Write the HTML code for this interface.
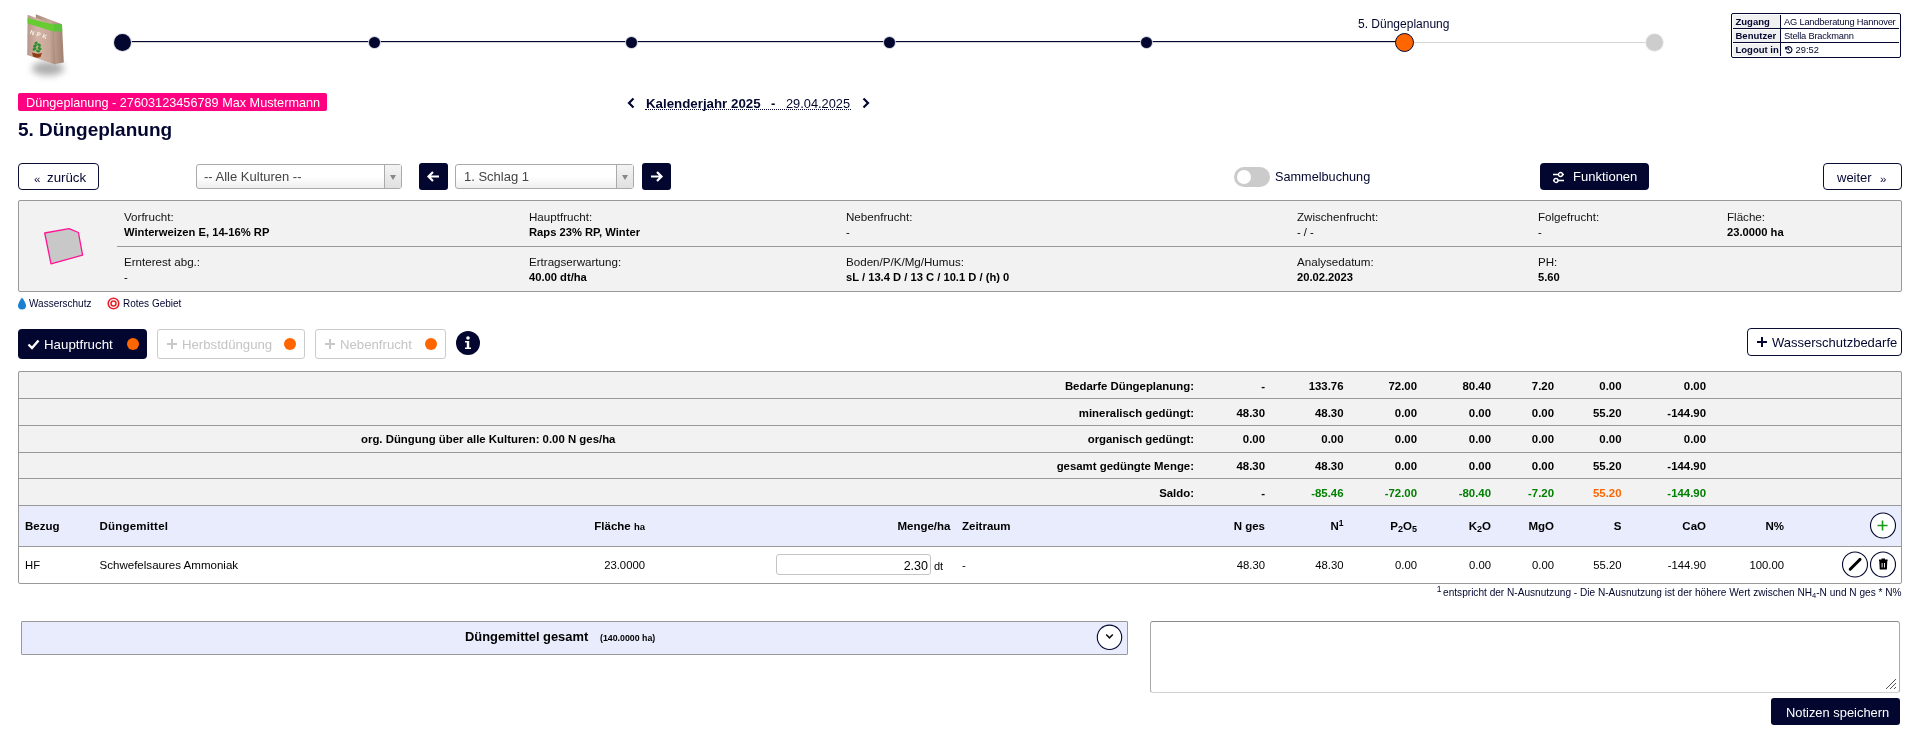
<!DOCTYPE html>
<html><head><meta charset="utf-8">
<style>
*{box-sizing:border-box;margin:0;padding:0}
html,body{width:1912px;height:732px;overflow:hidden;background:#fff}
body{font-family:"Liberation Sans",sans-serif;color:#030730;position:relative;will-change:transform}
.a{position:absolute;white-space:nowrap;line-height:1}
.b{font-weight:bold}
.r{text-align:right}
.btn-o{position:absolute;border:1.5px solid #0a0e35;border-radius:4px;background:#fff}
.btn-d{position:absolute;background:#030730;border-radius:4px}
.sel{position:absolute;border:1px solid #aaa;border-radius:3px;background:linear-gradient(#fff 0%,#fff 50%,#eee 100%)}
.sel .arr{position:absolute;right:0;top:0;bottom:0;width:17px;border-left:1px solid #aaa;background:linear-gradient(#f4f4f4,#e0e0e0)}
.sel .arr:after{content:"";position:absolute;left:5px;top:10px;border-left:3.5px solid transparent;border-right:3.5px solid transparent;border-top:5px solid #888}
.hl{position:absolute;left:18px;width:1884px;height:1px;background:#999}
</style></head><body>

<!-- logo -->
<svg class="a" style="left:10px;top:5px" width="70" height="85" viewBox="-10 -5 70 85">
  <defs>
    <filter id="blur" x="-50%" y="-50%" width="200%" height="200%"><feGaussianBlur stdDeviation="3.5"/></filter>
    <filter id="sb" x="-20%" y="-20%" width="140%" height="140%"><feGaussianBlur stdDeviation="0.5"/></filter>
    <linearGradient id="bagg" x1="0" x2="1"><stop offset="0" stop-color="#b8978a"/><stop offset="0.35" stop-color="#d2b3a5"/><stop offset="0.8" stop-color="#c6a797"/><stop offset="1" stop-color="#a88878"/></linearGradient>
    <linearGradient id="bagb" x1="0" x2="1"><stop offset="0" stop-color="#a88a7c"/><stop offset="0.5" stop-color="#c8aa9b"/><stop offset="1" stop-color="#a08070"/></linearGradient>
  </defs>
  <ellipse cx="28" cy="58.5" rx="16" ry="7" fill="#777" opacity="0.6" filter="url(#blur)"/>
  <g filter="url(#sb)">
  <path d="M15.8 4.3 L42 14.3 L43.8 52.5 L35 54 L15.8 45 Z" fill="url(#bagb)"/>
  <path d="M33 13.8 L42 14.3 L42.2 21.5 L33.5 21.5 Z" fill="#5cc43a"/>
  <path d="M7.6 4.8 L33.5 14.3 L35.4 54.5 L7.2 44.9 Z" fill="url(#bagg)"/>
  <path d="M7.6 8.1 L33.5 14.6 L33.7 21.5 L7.6 13.4 Z" fill="#66cc33"/>
  <text x="9.5" y="24" font-size="6.2" font-weight="bold" fill="#f6efe9" transform="rotate(17 9.5 24)" font-family="Liberation Sans" letter-spacing="2.2">NPK</text>
  <path d="M12 42.5 Q17 44.5 22 43 L20.5 47 Q16.5 48.5 13 46.5 Z" fill="#8e3d12"/>
  <g fill="#2f8f2f">
   <ellipse cx="15" cy="36" rx="2.2" ry="1.3" transform="rotate(-30 15 36)"/>
   <ellipse cx="19" cy="35" rx="2.2" ry="1.3" transform="rotate(30 19 35)"/>
   <ellipse cx="14.5" cy="39" rx="2.2" ry="1.3" transform="rotate(-30 14.5 39)"/>
   <ellipse cx="19.5" cy="38.5" rx="2.2" ry="1.3" transform="rotate(30 19.5 38.5)"/>
   <ellipse cx="16" cy="33" rx="1.8" ry="1.2" transform="rotate(-40 16 33)"/>
   <ellipse cx="18" cy="41" rx="2.2" ry="1.3" transform="rotate(20 18 41)"/>
  </g>
  </g>
</svg>

<!-- progress -->
<div class="a" style="left:122px;top:42px;width:1532px;height:1px;background:#d4d4d4"></div>
<div class="a" style="left:122px;top:41px;width:1282px;height:1px;background:#030730"></div>
<div class="a" style="left:114px;top:34px;width:17px;height:17px;border-radius:50%;background:#030730;box-shadow:0 0 0 1px #dfe0e6"></div>
<div class="a" style="left:369px;top:37px;width:11px;height:11px;border-radius:50%;background:#030730;box-shadow:0 0 0 1px #d0d2dc"></div>
<div class="a" style="left:626px;top:37px;width:11px;height:11px;border-radius:50%;background:#030730;box-shadow:0 0 0 1px #d0d2dc"></div>
<div class="a" style="left:884px;top:37px;width:11px;height:11px;border-radius:50%;background:#030730;box-shadow:0 0 0 1px #d0d2dc"></div>
<div class="a" style="left:1141px;top:37px;width:11px;height:11px;border-radius:50%;background:#030730;box-shadow:0 0 0 1px #d0d2dc"></div>
<div class="a" style="left:1395px;top:33px;width:19px;height:19px;border-radius:50%;background:#ff6600;border:1.6px solid #030730"></div>
<div class="a" style="left:1646px;top:34px;width:17px;height:17px;border-radius:50%;background:#cdcdcd;box-shadow:0 0 0 1px #f0f0f0"></div>
<div class="a" style="left:1358px;top:18px;font-size:12px">5. Düngeplanung</div>


<!-- user box -->
<div class="a" style="left:1731px;top:13px;width:170px;height:45px;border:1.5px solid #030730;border-radius:2px;background:#fff">
  <div class="a" style="left:1px;top:1px;width:47px;height:13px;background:#f0f0f0"></div>
  <div class="a" style="left:1px;top:15.5px;width:47px;height:13px;background:#f0f0f0"></div>
  <div class="a" style="left:1px;top:29.5px;width:47px;height:12.5px;background:#f0f0f0"></div>
  <div class="a" style="left:48px;top:1px;width:1px;height:41px;background:#030730"></div>
  <div class="a" style="left:1px;top:14px;width:166px;height:1px;background:#030730"></div>
  <div class="a" style="left:1px;top:28px;width:166px;height:1px;background:#030730"></div>
  <div class="a b" style="left:3.5px;top:3px;font-size:9.5px">Zugang</div>
  <div class="a b" style="left:3.5px;top:17px;font-size:9.5px">Benutzer</div>
  <div class="a b" style="left:3.5px;top:31px;font-size:9.5px">Logout in</div>
  <div class="a" style="left:52px;top:3.8px;font-size:9.3px;letter-spacing:-0.2px">AG Landberatung Hannover</div>
  <div class="a" style="left:52px;top:17.8px;font-size:9.3px;letter-spacing:-0.2px">Stella Brackmann</div>
  <div class="a" style="left:52px;top:31px;font-size:9.3px">
    <svg width="9" height="9" viewBox="0 0 16 16" style="vertical-align:-1px"><path d="M3 3 L3 7 L7 7" fill="none" stroke="#030730" stroke-width="2"/><path d="M3.5 6.5 A5.5 5.5 0 1 1 4 11.5" fill="none" stroke="#030730" stroke-width="2"/><path d="M8 5 L8 8.5 L10.5 10" fill="none" stroke="#030730" stroke-width="1.6"/></svg> 29:52</div>
</div>

<!-- badge + heading -->
<div class="a" style="left:18px;top:93px;width:309px;height:18px;background:#ff0080;border-radius:2px"></div>
<div class="a" style="left:26px;top:97px;font-size:12.7px;color:#fff">Düngeplanung - 27603123456789 Max Mustermann</div>
<div class="a b" style="left:18px;top:120px;font-size:19px">5. Düngeplanung</div>

<!-- calendar nav -->
<svg class="a" style="left:627px;top:97px" width="8" height="12" viewBox="0 0 8 12"><path d="M6.5 1.5 L2 6 L6.5 10.5" fill="none" stroke="#030730" stroke-width="2.2"/></svg>
<div class="a b" style="left:646px;top:97px;font-size:13.3px">Kalenderjahr 2025</div>
<div class="a b" style="left:771px;top:97px;font-size:13px">-</div>
<div class="a" style="left:786px;top:98px;font-size:12.8px">29.04.2025</div>
<div class="a" style="left:645px;top:109px;width:206px;height:0;border-top:1px dotted #030730"></div>
<svg class="a" style="left:862px;top:97px" width="8" height="12" viewBox="0 0 8 12"><path d="M1.5 1.5 L6 6 L1.5 10.5" fill="none" stroke="#030730" stroke-width="2.2"/></svg>

<!-- controls row -->
<div class="btn-o" style="left:18px;top:163px;width:81px;height:27px"></div>
<div class="a" style="left:34px;top:173.5px;font-size:11.5px">«</div>
<div class="a" style="left:47px;top:171px;font-size:13.3px">zurück</div>

<div class="sel" style="left:196px;top:164px;width:206px;height:25px"><div class="arr"></div></div>
<div class="a" style="left:204px;top:170px;font-size:13px;color:#444">-- Alle Kulturen --</div>

<div class="btn-d" style="left:419px;top:163px;width:29px;height:27px;border-radius:3px"></div>
<svg class="a" style="left:426px;top:169px" width="15" height="15" viewBox="0 0 15 15"><path d="M13 7.5 L2.5 7.5 M7 3 L2.5 7.5 L7 12" fill="none" stroke="#fff" stroke-width="2.2"/></svg>

<div class="sel" style="left:455px;top:164px;width:179px;height:25px"><div class="arr"></div></div>
<div class="a" style="left:464px;top:170px;font-size:13px;color:#444">1. Schlag 1</div>

<div class="btn-d" style="left:642px;top:163px;width:29px;height:27px;border-radius:3px"></div>
<svg class="a" style="left:649px;top:169px" width="15" height="15" viewBox="0 0 15 15"><path d="M2 7.5 L12.5 7.5 M8 3 L12.5 7.5 L8 12" fill="none" stroke="#fff" stroke-width="2.2"/></svg>

<div class="a" style="left:1234px;top:167px;width:36px;height:20px;border-radius:10px;background:#cbcbcb"></div>
<div class="a" style="left:1237px;top:170px;width:14px;height:14px;border-radius:50%;background:#fff"></div>
<div class="a" style="left:1275px;top:171px;font-size:12.7px">Sammelbuchung</div>

<div class="btn-d" style="left:1540px;top:163px;width:109px;height:27px"></div>
<svg class="a" style="left:1552px;top:171px" width="13" height="13" viewBox="0 0 13 13"><path d="M1 3.5 L12 3.5 M1 9.5 L12 9.5" stroke="#fff" stroke-width="1.3"/><circle cx="8.5" cy="3.5" r="2" fill="#030730" stroke="#fff" stroke-width="1.3"/><circle cx="4" cy="9.5" r="2" fill="#030730" stroke="#fff" stroke-width="1.3"/></svg>
<div class="a" style="left:1573px;top:170px;font-size:13px;color:#fff">Funktionen</div>

<div class="btn-o" style="left:1823px;top:163px;width:79px;height:27px"></div>
<div class="a" style="left:1837px;top:171px;font-size:13px">weiter</div>
<div class="a" style="left:1880px;top:173.5px;font-size:11.5px">»</div>


<!-- info box -->
<div class="a" style="left:18px;top:200px;width:1884px;height:92px;background:#f2f2f2;border:1px solid #999;border-radius:2px"></div>
<div class="a" style="left:117px;top:246px;width:1784px;height:1px;background:#999"></div>
<svg class="a" style="left:40px;top:225px" width="46" height="42" viewBox="0 0 46 42"><path d="M4.7 8 L29 3.7 L38.4 7.5 L42.6 30.2 L11 38.9 Z" fill="#c8c8c8" stroke="#ff1493" stroke-width="1.3" stroke-linejoin="round"/></svg>
<div class="a" style="left:124px;top:211px;font-size:11.6px;color:#111">Vorfrucht:</div>
<div class="a b" style="left:124px;top:227px;font-size:11.2px;color:#000">Winterweizen E, 14-16% RP</div>
<div class="a" style="left:124px;top:256px;font-size:11.6px;color:#111">Ernterest abg.:</div>
<div class="a" style="left:124px;top:272px;font-size:11.2px;color:#000">-</div>

<div class="a" style="left:529px;top:211px;font-size:11.6px;color:#111">Hauptfrucht:</div>
<div class="a b" style="left:529px;top:227px;font-size:11.2px;color:#000">Raps 23% RP, Winter</div>
<div class="a" style="left:529px;top:256px;font-size:11.6px;color:#111">Ertragserwartung:</div>
<div class="a b" style="left:529px;top:272px;font-size:11.2px;color:#000">40.00 dt/ha</div>

<div class="a" style="left:846px;top:211px;font-size:11.6px;color:#111">Nebenfrucht:</div>
<div class="a" style="left:846px;top:227px;font-size:11.2px;color:#000">-</div>
<div class="a" style="left:846px;top:256px;font-size:11.6px;color:#111">Boden/P/K/Mg/Humus:</div>
<div class="a b" style="left:846px;top:272px;font-size:11.2px;color:#000">sL / 13.4 D / 13 C / 10.1 D / (h) 0</div>

<div class="a" style="left:1297px;top:211px;font-size:11.6px;color:#111">Zwischenfrucht:</div>
<div class="a" style="left:1297px;top:227px;font-size:11.2px;color:#000">- / -</div>
<div class="a" style="left:1297px;top:256px;font-size:11.6px;color:#111">Analysedatum:</div>
<div class="a b" style="left:1297px;top:272px;font-size:11.2px;color:#000">20.02.2023</div>

<div class="a" style="left:1538px;top:211px;font-size:11.6px;color:#111">Folgefrucht:</div>
<div class="a" style="left:1538px;top:227px;font-size:11.2px;color:#000">-</div>
<div class="a" style="left:1538px;top:256px;font-size:11.6px;color:#111">PH:</div>
<div class="a b" style="left:1538px;top:272px;font-size:11.2px;color:#000">5.60</div>

<div class="a" style="left:1727px;top:211px;font-size:11.6px;color:#111">Fläche:</div>
<div class="a b" style="left:1727px;top:227px;font-size:11.2px;color:#000">23.0000 ha</div>

<!-- legend -->
<svg class="a" style="left:17px;top:297px" width="10" height="13" viewBox="0 0 10 13"><path d="M5 0.5 C5 0.5 1 6 1 8.5 A4 4 0 0 0 9 8.5 C9 6 5 0.5 5 0.5 Z" fill="#1a7fd0"/></svg>
<div class="a" style="left:29px;top:299.3px;font-size:10px">Wasserschutz</div>
<svg class="a" style="left:107px;top:297px" width="13" height="13" viewBox="0 0 13 13"><circle cx="6.5" cy="6.5" r="5.3" fill="none" stroke="#e8202a" stroke-width="1.6"/><circle cx="6.5" cy="6.5" r="2.5" fill="none" stroke="#e8202a" stroke-width="1.5"/></svg>
<div class="a" style="left:123px;top:299.3px;font-size:10px">Rotes Gebiet</div>

<!-- tabs -->
<div class="btn-d" style="left:18px;top:329px;width:129px;height:30px"></div>
<svg class="a" style="left:27px;top:339px" width="13" height="11" viewBox="0 0 13 11"><path d="M1.5 5.5 L5 9 L11.5 1.5" fill="none" stroke="#fff" stroke-width="2.4"/></svg>
<div class="a" style="left:44px;top:338px;font-size:13.3px;color:#fff">Hauptfrucht</div>
<div class="a" style="left:127px;top:338px;width:12px;height:12px;border-radius:50%;background:#ff6600"></div>

<div class="a" style="left:157px;top:329px;width:148px;height:30px;border:1px solid #ccc;border-radius:3px;background:#fff"></div>
<svg class="a" style="left:167px;top:339px" width="10" height="10" viewBox="0 0 10 10"><path d="M5 0 V10 M0 5 H10" stroke="#c8c8c8" stroke-width="2"/></svg>
<div class="a" style="left:182px;top:338px;font-size:13.2px;color:#c4c4c4">Herbstdüngung</div>
<div class="a" style="left:284px;top:338px;width:12px;height:12px;border-radius:50%;background:#ff6600"></div>

<div class="a" style="left:315px;top:329px;width:131px;height:30px;border:1px solid #ccc;border-radius:3px;background:#fff"></div>
<svg class="a" style="left:325px;top:339px" width="10" height="10" viewBox="0 0 10 10"><path d="M5 0 V10 M0 5 H10" stroke="#c8c8c8" stroke-width="2"/></svg>
<div class="a" style="left:340px;top:338px;font-size:13.2px;color:#c4c4c4">Nebenfrucht</div>
<div class="a" style="left:425px;top:338px;width:12px;height:12px;border-radius:50%;background:#ff6600"></div>

<div class="a" style="left:456px;top:331px;width:24px;height:24px;border-radius:50%;background:#030730"></div>
<svg class="a" style="left:462px;top:336px" width="12" height="14" viewBox="0 0 12 14"><circle cx="6" cy="2" r="1.8" fill="#fff"/><path d="M3 5 H7.2 V11.5 H9 V13 H3 V11.5 H4.8 V6.5 H3 Z" fill="#fff"/></svg>

<div class="btn-o" style="left:1747px;top:328px;width:155px;height:28px"></div>
<svg class="a" style="left:1757px;top:337px" width="10" height="10" viewBox="0 0 10 10"><path d="M5 0 V10 M0 5 H10" stroke="#030730" stroke-width="2"/></svg>
<div class="a" style="left:1772px;top:336px;font-size:13px">Wasserschutzbedarfe</div>

<!-- summary table -->
<div class="a" style="left:18px;top:371px;width:1884px;height:134px;background:#f2f2f2"></div>
<div class="a" style="left:18px;top:505px;width:1884px;height:41px;background:#e8ecfc"></div>
<div class="a" style="left:18px;top:546px;width:1884px;height:37px;background:#fff"></div>
<div class="a" style="left:18px;top:371px;width:1884px;height:213px;border:1px solid #999;border-radius:2px"></div>
<div class="a" style="left:18px;top:398px;width:1884px;height:1px;background:#999"></div>
<div class="a" style="left:18px;top:425px;width:1884px;height:1px;background:#999"></div>
<div class="a" style="left:18px;top:452px;width:1884px;height:1px;background:#999"></div>
<div class="a" style="left:18px;top:478px;width:1884px;height:1px;background:#999"></div>
<div class="a" style="left:18px;top:505px;width:1884px;height:1px;background:#999"></div>
<div class="a" style="left:18px;top:546px;width:1884px;height:1px;background:#999"></div>
<div class="a b" style="right:718.0px;top:381.3px;font-size:11.4px;color:#000">Bedarfe Düngeplanung:</div>
<div class="a b" style="right:647.0px;top:381.3px;font-size:11.4px;color:#000">-</div>
<div class="a b" style="right:568.5px;top:381.3px;font-size:11.4px;color:#000">133.76</div>
<div class="a b" style="right:495.0px;top:381.3px;font-size:11.4px;color:#000">72.00</div>
<div class="a b" style="right:421.0px;top:381.3px;font-size:11.4px;color:#000">80.40</div>
<div class="a b" style="right:358.0px;top:381.3px;font-size:11.4px;color:#000">7.20</div>
<div class="a b" style="right:290.5px;top:381.3px;font-size:11.4px;color:#000">0.00</div>
<div class="a b" style="right:206.0px;top:381.3px;font-size:11.4px;color:#000">0.00</div>
<div class="a b" style="right:718.0px;top:407.8px;font-size:11.4px;color:#000">mineralisch gedüngt:</div>
<div class="a b" style="right:647.0px;top:407.8px;font-size:11.4px;color:#000">48.30</div>
<div class="a b" style="right:568.5px;top:407.8px;font-size:11.4px;color:#000">48.30</div>
<div class="a b" style="right:495.0px;top:407.8px;font-size:11.4px;color:#000">0.00</div>
<div class="a b" style="right:421.0px;top:407.8px;font-size:11.4px;color:#000">0.00</div>
<div class="a b" style="right:358.0px;top:407.8px;font-size:11.4px;color:#000">0.00</div>
<div class="a b" style="right:290.5px;top:407.8px;font-size:11.4px;color:#000">55.20</div>
<div class="a b" style="right:206.0px;top:407.8px;font-size:11.4px;color:#000">-144.90</div>
<div class="a b" style="right:718.0px;top:434.3px;font-size:11.4px;color:#000">organisch gedüngt:</div>
<div class="a b" style="right:647.0px;top:434.3px;font-size:11.4px;color:#000">0.00</div>
<div class="a b" style="right:568.5px;top:434.3px;font-size:11.4px;color:#000">0.00</div>
<div class="a b" style="right:495.0px;top:434.3px;font-size:11.4px;color:#000">0.00</div>
<div class="a b" style="right:421.0px;top:434.3px;font-size:11.4px;color:#000">0.00</div>
<div class="a b" style="right:358.0px;top:434.3px;font-size:11.4px;color:#000">0.00</div>
<div class="a b" style="right:290.5px;top:434.3px;font-size:11.4px;color:#000">0.00</div>
<div class="a b" style="right:206.0px;top:434.3px;font-size:11.4px;color:#000">0.00</div>
<div class="a b" style="right:718.0px;top:461.3px;font-size:11.4px;color:#000">gesamt gedüngte Menge:</div>
<div class="a b" style="right:647.0px;top:461.3px;font-size:11.4px;color:#000">48.30</div>
<div class="a b" style="right:568.5px;top:461.3px;font-size:11.4px;color:#000">48.30</div>
<div class="a b" style="right:495.0px;top:461.3px;font-size:11.4px;color:#000">0.00</div>
<div class="a b" style="right:421.0px;top:461.3px;font-size:11.4px;color:#000">0.00</div>
<div class="a b" style="right:358.0px;top:461.3px;font-size:11.4px;color:#000">0.00</div>
<div class="a b" style="right:290.5px;top:461.3px;font-size:11.4px;color:#000">55.20</div>
<div class="a b" style="right:206.0px;top:461.3px;font-size:11.4px;color:#000">-144.90</div>
<div class="a b" style="right:718.0px;top:488.3px;font-size:11.4px;color:#000">Saldo:</div>
<div class="a b" style="right:647.0px;top:488.3px;font-size:11.4px;color:#000">-</div>
<div class="a b" style="right:568.5px;top:488.3px;font-size:11.4px;color:#008000">-85.46</div>
<div class="a b" style="right:495.0px;top:488.3px;font-size:11.4px;color:#008000">-72.00</div>
<div class="a b" style="right:421.0px;top:488.3px;font-size:11.4px;color:#008000">-80.40</div>
<div class="a b" style="right:358.0px;top:488.3px;font-size:11.4px;color:#008000">-7.20</div>
<div class="a b" style="right:290.5px;top:488.3px;font-size:11.4px;color:#ff6600">55.20</div>
<div class="a b" style="right:206.0px;top:488.3px;font-size:11.4px;color:#008000">-144.90</div>
<div class="a b" style="left:361px;top:434.3px;font-size:11.4px;color:#000">org. Düngung über alle Kulturen: 0.00 N ges/ha</div>
<div class="a b" style="left:25px;top:520.6px;font-size:11.5px;color:#000">Bezug</div>
<div class="a b" style="left:99.5px;top:520.6px;font-size:11.5px;color:#000;letter-spacing:0.2px">Düngemittel</div>
<div class="a b" style="right:1267.0px;top:520.6px;font-size:11.5px;color:#000">Fläche <span style="font-size:9.5px">ha</span></div>
<div class="a b" style="right:961.5px;top:520.6px;font-size:11.5px;color:#000">Menge/ha</div>
<div class="a b" style="left:962px;top:520.6px;font-size:11.5px;color:#000">Zeitraum</div>
<div class="a b" style="right:647.0px;top:520.6px;font-size:11.5px;color:#000">N ges</div>
<div class="a b" style="right:568.5px;top:520.6px;font-size:11.5px;color:#000">N<sup style="font-size:8.5px;vertical-align:4px;line-height:0">1</sup></div>
<div class="a b" style="right:495.0px;top:520.6px;font-size:11.5px;color:#000">P<sub style="font-size:9px;vertical-align:-1.5px;line-height:0">2</sub>O<sub style="font-size:9px;vertical-align:-1.5px;line-height:0">5</sub></div>
<div class="a b" style="right:421.0px;top:520.6px;font-size:11.5px;color:#000">K<sub style="font-size:9px;vertical-align:-1.5px;line-height:0">2</sub>O</div>
<div class="a b" style="right:358.0px;top:520.6px;font-size:11.5px;color:#000">MgO</div>
<div class="a b" style="right:290.5px;top:520.6px;font-size:11.5px;color:#000">S</div>
<div class="a b" style="right:206.0px;top:520.6px;font-size:11.5px;color:#000">CaO</div>
<div class="a b" style="right:128.0px;top:520.6px;font-size:11.5px;color:#000">N%</div>
<svg class="a" style="left:1869px;top:512px" width="28" height="28" viewBox="0 0 28 28"><circle cx="14" cy="13.5" r="12.5" fill="#fff" stroke="#030730" stroke-width="1.1"/></svg>
<svg class="a" style="left:1877px;top:520px" width="11" height="11" viewBox="0 0 11 11"><path d="M5.5 0.5 V10.5 M0.5 5.5 H10.5" stroke="#1a9a1a" stroke-width="1.6"/></svg>
<div class="a" style="left:25px;top:559.8px;font-size:11.3px;color:#000">HF</div>
<div class="a" style="left:99.5px;top:560.0px;font-size:11.55px;color:#000">Schwefelsaures Ammoniak</div>
<div class="a" style="right:1267.0px;top:559.8px;font-size:11.3px;color:#000">23.0000</div>
<div class="a" style="left:776px;top:554px;width:155px;height:21px;border:1px solid #c4c4c4;border-radius:3px;background:#fff"></div>
<div class="a" style="right:984.0px;top:560.3px;font-size:12.5px;color:#000">2.30</div>
<div class="a" style="left:934px;top:560.8px;font-size:11px;color:#000">dt</div>
<div class="a" style="left:962px;top:559.8px;font-size:11.3px;color:#000">-</div>
<div class="a" style="right:647.0px;top:559.8px;font-size:11.3px;color:#000">48.30</div>
<div class="a" style="right:568.5px;top:559.8px;font-size:11.3px;color:#000">48.30</div>
<div class="a" style="right:495.0px;top:559.8px;font-size:11.3px;color:#000">0.00</div>
<div class="a" style="right:421.0px;top:559.8px;font-size:11.3px;color:#000">0.00</div>
<div class="a" style="right:358.0px;top:559.8px;font-size:11.3px;color:#000">0.00</div>
<div class="a" style="right:290.5px;top:559.8px;font-size:11.3px;color:#000">55.20</div>
<div class="a" style="right:206.0px;top:559.8px;font-size:11.3px;color:#000">-144.90</div>
<div class="a" style="right:128.0px;top:559.8px;font-size:11.3px;color:#000">100.00</div>
<svg class="a" style="left:1841px;top:551px" width="56" height="28" viewBox="0 0 56 28"><circle cx="14" cy="13.5" r="12.5" fill="#fff" stroke="#030730" stroke-width="1.1"/><circle cx="42" cy="13.5" r="12.5" fill="#fff" stroke="#030730" stroke-width="1.1"/><path d="M9.2 18.2 L17.2 10.2" stroke="#000" stroke-width="3" stroke-linecap="round"/><path d="M18.2 9.2 L19 8.4" stroke="#000" stroke-width="3" stroke-linecap="round"/><path d="M38 9.2 H46.6 M40.5 8.2 H44" stroke="#000" stroke-width="1.6"/><path d="M38.3 10 H46.3 L45.9 18 Q45.9 18.5 45.4 18.5 H39.2 Q38.7 18.5 38.7 18 Z" fill="#000"/><path d="M41.1 12 V16.5 M43.5 12 V16.5" stroke="#fff" stroke-width="0.9"/></svg>
<div class="a" style="right:10.5px;top:588px;font-size:10.1px"><sup style="font-size:8.5px;vertical-align:4px;line-height:0;margin-right:1.5px">1</sup>entspricht der N-Ausnutzung - Die N-Ausnutzung ist der höhere Wert zwischen NH<sub style="font-size:7.5px;vertical-align:-2px;line-height:0">4</sub>-N und N ges * N%</div>
<div class="a" style="left:21px;top:621px;width:1107px;height:34px;background:#e8ecfc;border:1px solid #999;border-radius:1px"></div>
<div class="a b" style="left:465px;top:631px;font-size:12.9px;color:#000">Düngemittel gesamt</div>
<div class="a b" style="left:600px;top:634px;font-size:8.8px;color:#000">(140.0000 ha)</div>
<svg class="a" style="left:1096px;top:624px" width="28" height="28" viewBox="0 0 28 28"><circle cx="13.5" cy="13.3" r="12.2" fill="#fff" stroke="#030730" stroke-width="1.1"/></svg>
<svg class="a" style="left:1105px;top:633px" width="9" height="7" viewBox="0 0 9 7"><path d="M1.2 1.5 L4.5 4.8 L7.8 1.5" fill="none" stroke="#111" stroke-width="1.6"/></svg>
<div class="a" style="left:1150px;top:621px;width:750px;height:72px;border:1px solid #a8a8a8;border-top-color:#8a8a8a;border-bottom-color:#d0d0d0;border-radius:3px;background:#fff"></div>
<svg class="a" style="left:1883px;top:676px" width="14" height="14" viewBox="0 0 14 14"><path d="M3 13 L13 3 M7 13 L13 7 M11 13 L13 11" stroke="#555" stroke-width="1"/></svg>
<div class="btn-d" style="left:1771px;top:698px;width:129px;height:27px;border-radius:3px"></div>
<div class="a" style="left:1786px;top:707px;font-size:12.9px;color:#fff">Notizen speichern</div>
</body></html>
